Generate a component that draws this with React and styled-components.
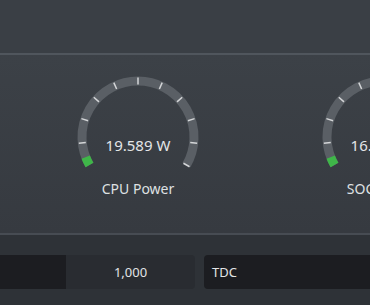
import styled, { createGlobalStyle } from "styled-components";

const GlobalStyle = createGlobalStyle`
  html, body {
    margin: 0;
    padding: 0;
    background: #2e3237;
    overflow: hidden;
  }
  body {
    width: 370px;
    height: 305px;
    font-family: "Noto Sans", "Open Sans", sans-serif;
  }
`;

// Page shell
const Page = styled.div`
  width: 370px;
  height: 305px;
  display: flex;
  flex-direction: column;
  overflow: hidden;
`;

// Empty header strip above the gauges
const Header = styled.div`
  height: 53px;
  flex: none;
  background: #3a3f45;
  border-bottom: 2px solid #50565d;
`;

// Gauge panel
const GaugePanel = styled.section`
  height: 180px;
  flex: none;
  display: flex;
  gap: 115px;
  padding: 17px 0 0 73px;
  box-sizing: border-box;
  background: linear-gradient(#3c4147, #363a40);
  border-bottom: 2px solid #474c53;
`;

const GaugeBox = styled.div`
  width: 130px;
  flex: none;
  display: flex;
  flex-direction: column;
  align-items: center;
`;

const Dial = styled.div`
  position: relative;
  width: 130px;
  height: 100px;
`;

const Reading = styled.div`
  position: absolute;
  left: -10px;
  right: -10px;
  top: 64px;
  text-align: center;
  font-size: 15px;
  line-height: 18px;
  color: #e4e6e8;
  white-space: nowrap;
`;

const GaugeLabel = styled.div`
  margin-top: 8px;
  font-size: 14px;
  line-height: 18px;
  color: #dfe1e3;
  white-space: nowrap;
`;

// Parameter rows
const ParamArea = styled.section`
  flex: 1;
  padding-top: 20px;
  background: #2e3237;
`;

const ParamRow = styled.div`
  display: flex;
  gap: 9px;
  margin-left: -100px;
`;

const Pair = styled.div`
  display: flex;
  flex: none;
  height: 34px;
  border-radius: 4px;
  overflow: hidden;
`;

const Cell = styled.div`
  width: ${({ $w }) => $w}px;
  display: flex;
  align-items: center;
  justify-content: ${({ $value }) => ($value ? "center" : "flex-start")};
  padding: 0 8px;
  box-sizing: border-box;
  background: ${({ $value }) => ($value ? "#292c31" : "#1c1d21")};
  font-size: 13px;
  color: #e2e4e6;
`;

const CX = 65;
const CY = 65;
const R = 56;

const pt = (deg, r) => {
  const a = (deg * Math.PI) / 180;
  return [CX + r * Math.sin(a), CY - r * Math.cos(a)];
};

const arc = (from, to, r) => {
  const [x1, y1] = pt(from, r);
  const [x2, y2] = pt(to, r);
  const large = to - from > 180 ? 1 : 0;
  return `M${x1} ${y1} A${r} ${r} 0 ${large} 1 ${x2} ${y2}`;
};

const ticks = Array.from({ length: 11 }, (_, i) => -120 + i * 24);

const Gauge = ({ value, label }) => (
  <GaugeBox>
    <Dial>
      <svg width="130" height="100" viewBox="0 0 130 100">
        <path d={arc(-120, 120, R)} fill="none" stroke="#5a5f65" strokeWidth="9" />
        <path d={arc(-120, -111, R)} fill="none" stroke="#3fb649" strokeWidth="9" />
        {ticks.slice(1).map((t) => {
          const [x1, y1] = pt(t, R - 3.5);
          const [x2, y2] = pt(t, R + 3.5);
          return (
            <line key={t} x1={x1} y1={y1} x2={x2} y2={y2} stroke="#d4d6d8" strokeWidth="1.5" />
          );
        })}
      </svg>
      <Reading>{value}</Reading>
    </Dial>
    <GaugeLabel>{label}</GaugeLabel>
  </GaugeBox>
);

export default function App() {
  return (
    <>
      <GlobalStyle />
      <Page>
        <Header />
        <GaugePanel>
          <Gauge value="19.589 W" label="CPU Power" />
          <Gauge value="16.402 W" label="SOC Power" />
        </GaugePanel>
        <ParamArea>
          <ParamRow>
            <Pair>
              <Cell $w={166}>PPT</Cell>
              <Cell $w={129} $value>1,000</Cell>
            </Pair>
            <Pair>
              <Cell $w={166}>TDC</Cell>
              <Cell $w={129} $value>1,000</Cell>
            </Pair>
          </ParamRow>
        </ParamArea>
      </Page>
    </>
  );
}
